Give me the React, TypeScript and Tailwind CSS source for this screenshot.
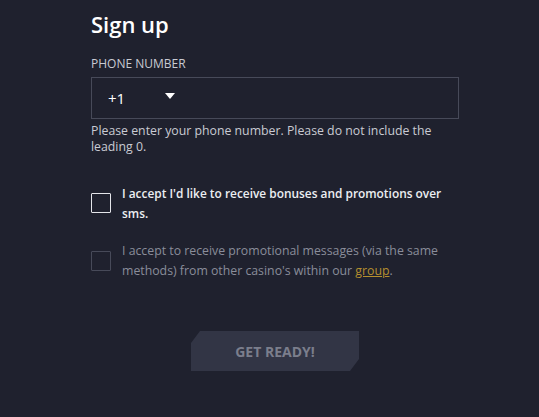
export default function App() {
  return (
    <div className="min-h-[417px] w-full bg-[#1f212e] font-['Open_Sans',sans-serif] text-white">
      <div className="ml-[91px] w-[368px] pt-[9px]">
        <h1 className="text-[22px] font-semibold leading-[30px] text-white">Sign up</h1>

        <label className="mt-[17px] block text-[12px] leading-[16px] text-[#c9cbd3] uppercase">
          Phone number
        </label>
        <div className="mt-[5px] flex h-[42px] items-center border border-[#474a59] bg-[#1f212e] pl-[16px]">
          <span className="w-[57px] text-[15px] text-white">+1</span>
          <svg width="10" height="6" viewBox="0 0 10 6" className="mt-[-4px]">
            <path d="M0 0h10L5 6z" fill="#ffffff" />
          </svg>
        </div>
        <p className="mt-[4px] text-[12.3px] leading-[16px] text-[#c9cbd3]">
          Please enter your phone number. Please do not include the leading 0.
        </p>

        <div className="mt-[28px] flex gap-[11px]">
          <div className="mt-[10px] h-[20px] w-[20px] shrink-0 rounded-[1px] border-[1.5px] border-[#e4e5ea]" />
          <p className="text-[11.9px] font-semibold leading-[20px] text-[#eceef2]">
            I accept I'd like to receive bonuses and promotions over sms.
          </p>
        </div>

        <div className="mt-[18px] flex gap-[11px]">
          <div className="mt-[10px] h-[20px] w-[20px] shrink-0 rounded-[1px] border border-[#474a59]" />
          <p className="text-[12.3px] leading-[20px] text-[#8a8d9a]">
            I accept to receive promotional messages (via the same methods) from other casino's within our{' '}
            <a className="text-[#b48f2e] underline">group</a>
            <span>.</span>
          </p>
        </div>

        <div className="mt-[50px] flex justify-center">
          <button
            type="button"
            className="h-[40px] w-[168px] bg-[#323545] text-[14px] font-bold text-[#7b7e8c] [clip-path:polygon(9px_0,100%_0,100%_calc(100%-12px),calc(100%-9px)_100%,0_100%,0_12px)]"
          >
            GET READY!
          </button>
        </div>
      </div>
    </div>
  );
}
